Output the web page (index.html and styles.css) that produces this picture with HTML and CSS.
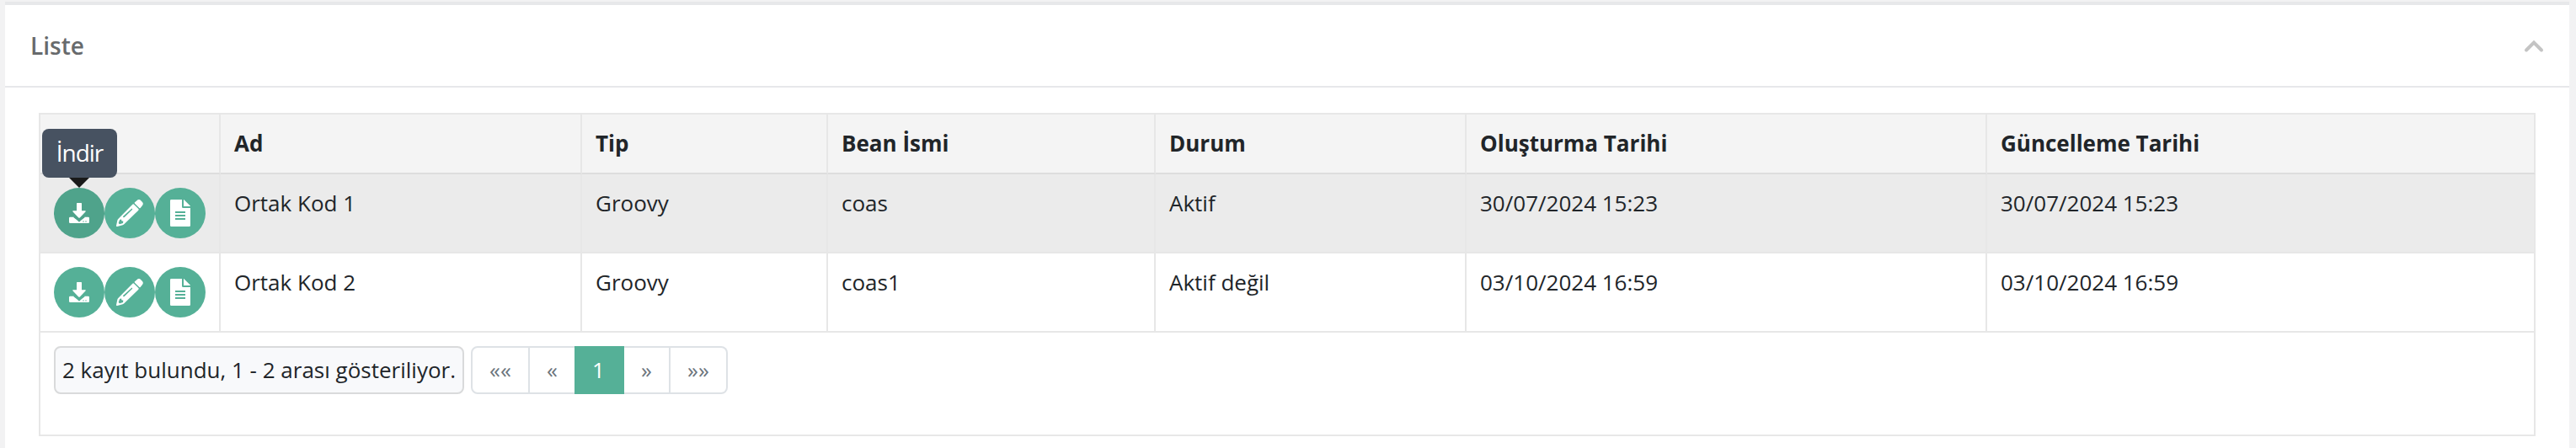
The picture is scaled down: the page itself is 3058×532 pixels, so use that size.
FILE: index.html
```html
<!DOCTYPE html>
<html lang="tr">
<head>
<meta charset="utf-8">
<title>Liste</title>
<link rel="stylesheet" href="styles.css">
</head>
<body>
<svg class="sprite" aria-hidden="true">
  <symbol id="i-download" viewBox="0 0 96 96">
    <path d="M16 62h13l19 18 19-18h13q4 0 4 4v14q0 4-4 4H16q-4 0-4-4V66q0-4 4-4Z"/>
    <path class="gap" d="M30 61 42 69q6 4 12 0L66 61"/>
    <path d="M41 12h14q2 0 2 2v26h12q4 0 2 3L51 64q-3 3-6 0L25 43q-2-3 2-3h12V14q0-2 2-2Z"/>
    <circle class="dot" cx="63" cy="78" r="2"/><circle class="dot" cx="72" cy="78" r="2"/>
  </symbol>
  <symbol id="i-pencil" viewBox="0 0 96 96">
    <path d="M75 2q6-5 12 1l6 6q5 6 0 12l-7 9q-2 2-4 0L66 14q-2-2 0-4Z"/>
    <path fill-rule="evenodd" d="M58 17q3-2 5 0l16 16q2 2 0 5L28 88q-2 2-5 3L4 96q-4 1-4-3L4 74q1-3 3-5ZM55 32 25 59q-2 3 0 4t4 0L56 37q2-2 1-4t-2-1ZM12 73 8 84l4 4 12-4 1-7-6-1-1-6Z"/>
  </symbol>
  <symbol id="i-file" viewBox="0 0 96 96">
    <path fill-rule="evenodd" d="M16 0h38v26q0 4 4 4h26v62q0 4-4 4H16q-4 0-4-4V4q0-4 4-4ZM30 42v6h36v-6ZM30 54v6h36v-6ZM30 66v6h36v-6Z"/>
    <path d="M60 0q2 0 3 2l19 19q2 2 2 3H60Z"/>
  </symbol>
</svg>
<section class="card">
  <header class="card-header">
    <h2>Liste</h2>
    <svg class="chevron" viewBox="0 0 24 16"><path d="M3 12.5 12 3.5 21 12.5"/></svg>
  </header>
  <div class="card-body">
    <table class="grid">
      <colgroup><col class="c-actions"><col class="c-name"><col class="c-type"><col class="c-bean"><col class="c-status"><col class="c-created"><col class="c-updated"></colgroup>
      <thead>
        <tr><th></th><th>Ad</th><th>Tip</th><th>Bean İsmi</th><th>Durum</th><th>Oluşturma Tarihi</th><th>Güncelleme Tarihi</th></tr>
      </thead>
      <tbody>
        <tr class="hover">
          <td><div class="actions">
            <button class="btn active"><svg><use href="#i-download"/></svg><span class="tooltip">İndir</span></button>
            <button class="btn"><svg><use href="#i-pencil"/></svg></button>
            <button class="btn"><svg><use href="#i-file"/></svg></button>
          </div></td>
          <td>Ortak Kod 1</td><td>Groovy</td><td>coas</td><td>Aktif</td><td>30/07/2024 15:23</td><td>30/07/2024 15:23</td>
        </tr>
        <tr>
          <td><div class="actions">
            <button class="btn"><svg><use href="#i-download"/></svg></button>
            <button class="btn"><svg><use href="#i-pencil"/></svg></button>
            <button class="btn"><svg><use href="#i-file"/></svg></button>
          </div></td>
          <td>Ortak Kod 2</td><td>Groovy</td><td>coas1</td><td>Aktif değil</td><td>03/10/2024 16:59</td><td>03/10/2024 16:59</td>
        </tr>
      </tbody>
      <tfoot>
        <tr><td colspan="7"><div class="pager">
          <span class="summary">2 kayıt bulundu, 1 - 2 arası gösteriliyor.</span>
          <ul class="pages"><li class="wide">««</li><li>«</li><li class="current">1</li><li>»</li><li class="wide">»»</li></ul>
        </div></td></tr>
      </tfoot>
    </table>
  </div>
</section>
</body>
</html>
```

FILE: styles.css
```css
* { box-sizing: border-box; }
body {
  margin: 0;
  padding: 2px 8px 0 6px;
  height: 532px;
  overflow: hidden;
  background: #f2f2f3;
  color: #212529;
  font: 26px/36px "Open Sans", sans-serif;
}
.sprite { display: none; }
.card { height: 540px; background: #fff; border-top: 4px solid #e7e8ea; }
.card-header {
  display: flex;
  align-items: center;
  justify-content: space-between;
  height: 98px;
  padding: 0 30px;
  border-bottom: 2px solid #e7e8ea;
}
.card-header h2 { margin: 0; font-size: 28px; line-height: 42px; font-weight: 600; color: #676a6c; }
.chevron { width: 24px; height: 16px; margin-top: 2px; fill: none; stroke: #c4c4c4; stroke-width: 4; stroke-linecap: round; }
.card-body { padding: 30px 40px; }

.grid { width: 2964px; table-layout: fixed; border-collapse: separate; border-spacing: 0; border: solid #e7e7e7; border-width: 2px 0 0 2px; }
.c-actions { width: 214px; }
.c-name { width: 429px; }
.c-type { width: 292px; }
.c-bean { width: 389px; }
.c-status { width: 369px; }
.c-created { width: 618px; }
.c-updated { width: 651px; }
.grid th, .grid td { padding: 16px 14px 16px 16px; text-align: left; vertical-align: top; border: solid #e7e7e7; border-width: 0 2px 2px 0; }
.grid th { height: 71px; padding-bottom: 14px; background: #f4f4f4; border-bottom-color: #ddd; font-weight: 700; }
.grid tbody td { height: 94px; }
.grid .hover td { background: #ebebeb; }
.grid tfoot td { height: 123px; }

.actions { display: flex; }
.btn { position: relative; display: flex; align-items: center; justify-content: center; width: 60px; height: 60px; padding: 0; border: 0; border-radius: 50%; background: #55b097; color: #55b097; font: inherit; }
.btn svg { width: 32px; height: 32px; fill: #fff; overflow: visible; }
.btn.active { background: #4fa38b; color: #4fa38b; }
.gap { fill: none; stroke: currentColor; stroke-width: 7; }
.dot { fill: currentColor; }
.tooltip { position: absolute; left: -14px; bottom: 72px; width: 89px; height: 58px; border-radius: 8px; background: #475261; color: #fff; font-size: 28px; line-height: 57px; letter-spacing: -1px; text-align: center; }
.tooltip::after { content: ""; position: absolute; top: 100%; left: 32px; border: 12px solid transparent; border-top-color: #1a1a1a; border-bottom: 0; }

.pager { display: flex; align-items: flex-start; gap: 8px; }
.summary { width: 487px; height: 57px; padding: 0 8px; border: 2px solid #d9dadb; border-radius: 8px; background: #f8f9fb; line-height: 52px; white-space: nowrap; }
.pages { display: flex; height: 57px; margin: 0; padding: 0; list-style: none; color: #6c757d; line-height: 52px; text-align: center; }
.pages li { width: 55px; border: solid #dee2e6; border-width: 2px 2px 2px 0; }
.pages .wide { width: 68px; }
.pages .wide:first-child { width: 70px; border-left-width: 2px; border-radius: 8px 0 0 8px; }
.pages .wide:last-child { border-radius: 0 8px 8px 0; }
.pages li:nth-child(2) { width: 53px; border-right: 0; }
.pages .current { width: 59px; border-color: #55b097; background: #55b097; color: #fff; }
```
